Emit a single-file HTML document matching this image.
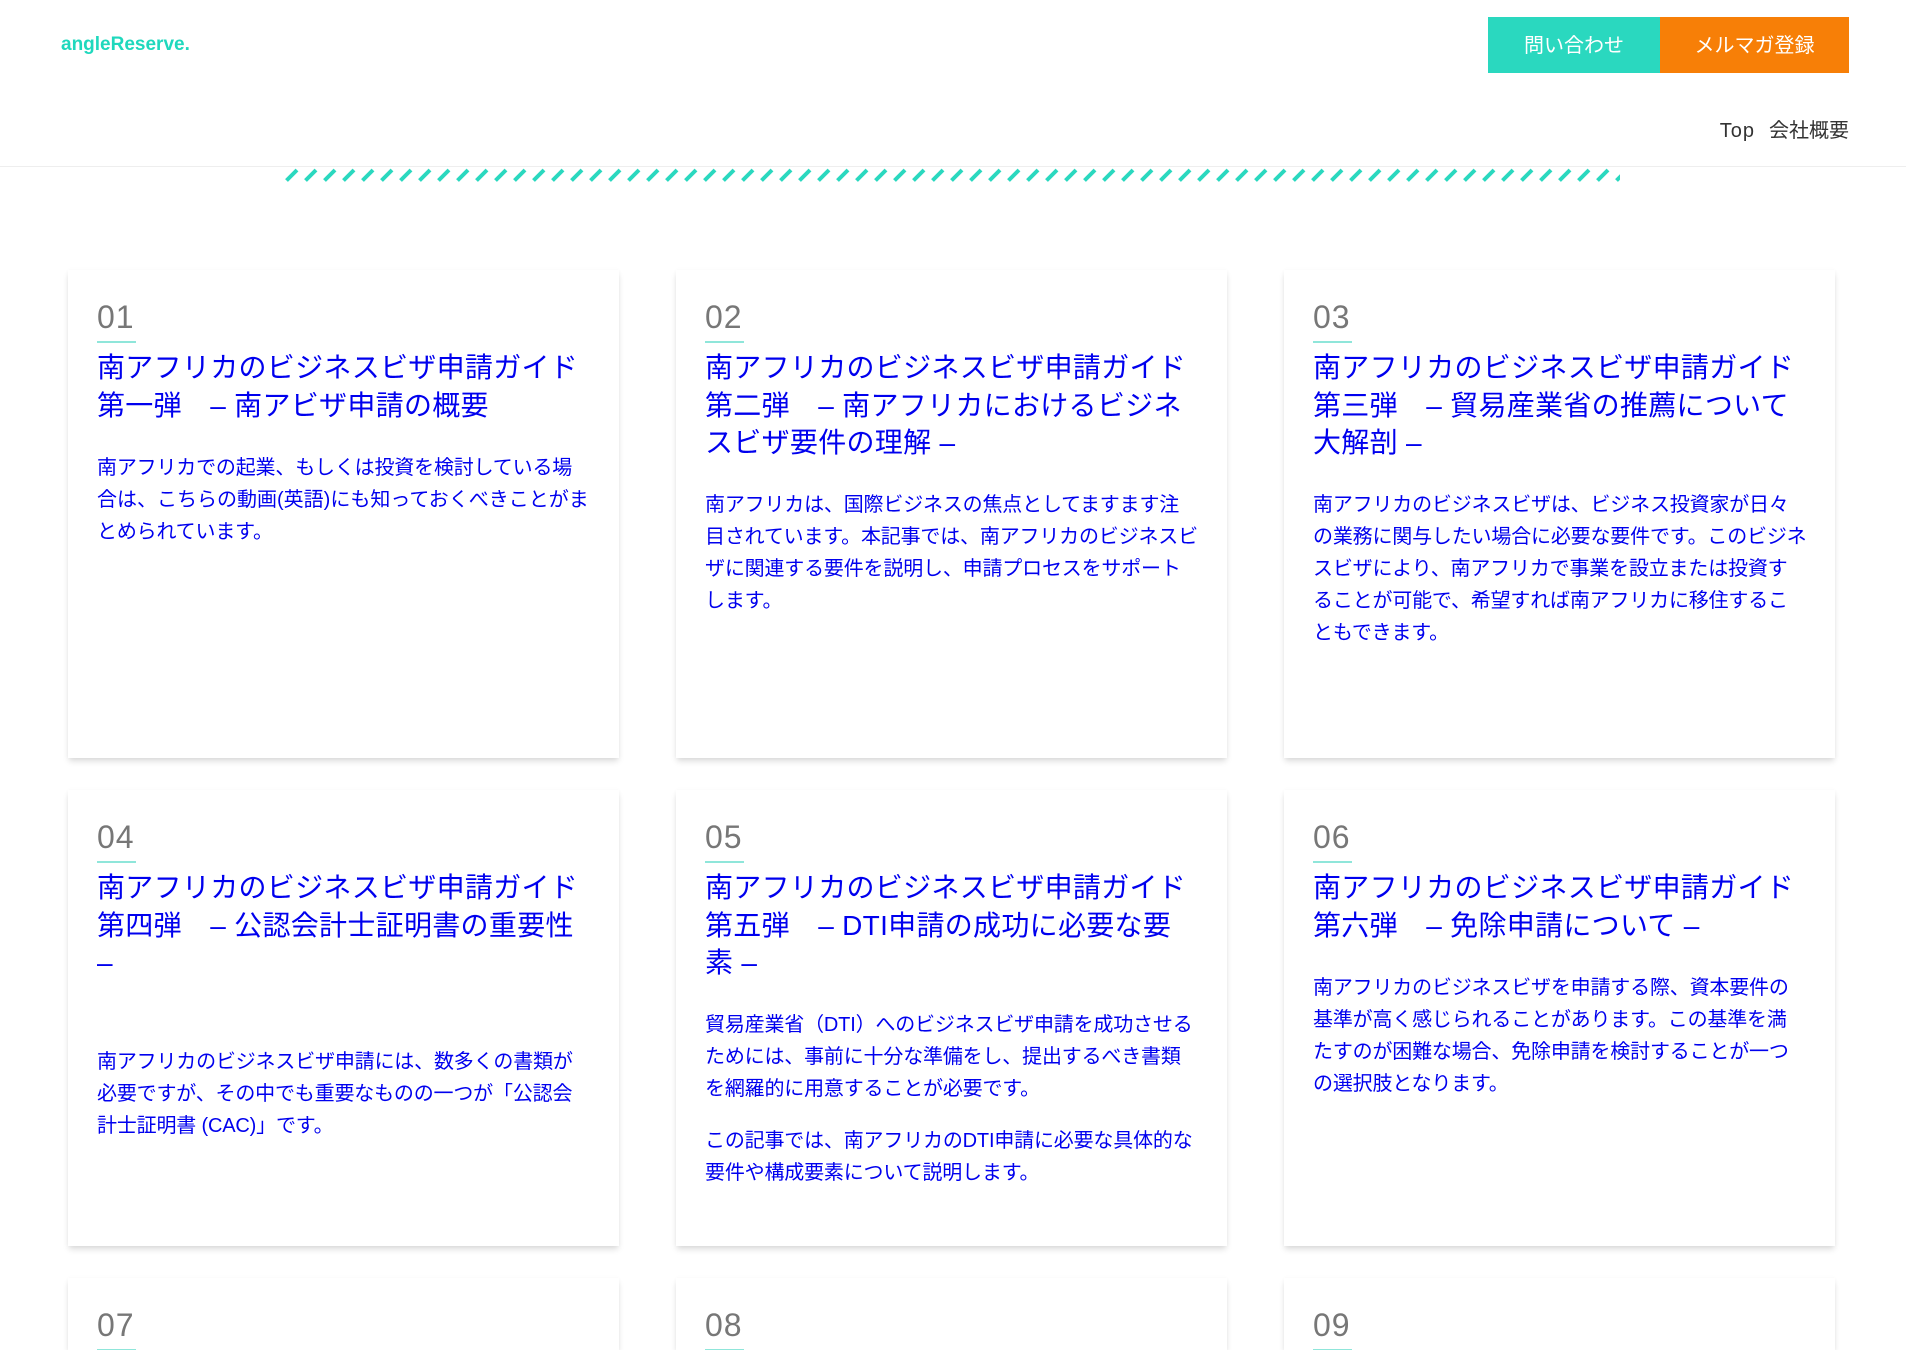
<!DOCTYPE html>
<html lang="ja">
<head>
<meta charset="utf-8">
<title>angleReserve</title>
<style>
html,body{margin:0;padding:0;background:#fff;width:1906px;height:1350px;overflow:hidden}
body{position:relative;font-family:"Liberation Sans","Noto Sans CJK JP",sans-serif;font-weight:400}
.logo{position:absolute;left:61px;top:33px;font-size:19px;line-height:24px;font-weight:700;color:#1fd8bd;white-space:nowrap}
.btn{position:absolute;top:17px;height:56px;line-height:59px;text-align:center;color:#fff;font-size:20px;font-weight:400}
.b1{left:1488px;width:172px;background:#2ad8bf}
.b2{left:1660px;width:189px;background:#f77f07}
.nav{position:absolute;top:115px;right:57px;font-size:20px;line-height:32px;color:#333;white-space:nowrap;font-weight:400}
.nav b{font-weight:400;letter-spacing:1px}
.nav span{margin-left:14px}
.rule{position:absolute;left:0;top:166px;width:1906px;height:1px;background:#eee}
.stripes{position:absolute;left:285px;top:168px}
.card{position:absolute;width:551px;background:#fff;box-shadow:0 4px 6px -1px rgba(0,0,0,.15),0 0 4px rgba(0,0,0,.03);box-sizing:border-box;padding:27px 29px 0;overflow:hidden}
.num{font-size:32px;line-height:40px;color:#777;width:39px;border-bottom:2px solid #8fe6da;padding-bottom:4px;white-space:nowrap;letter-spacing:1px}
.t{margin:6px 0 0;font-size:28px;line-height:37.5px;color:#00e;font-weight:400;white-space:nowrap;letter-spacing:.3px}
.d{margin:27.5px 0 0;font-size:20px;line-height:32px;color:#00e;white-space:nowrap;letter-spacing:-.18px}
.d+.d{margin-top:20px}
.x1{left:68px}.x2{left:676px}.x3{left:1284px}
.r1{top:270px;height:488px}
.r2{top:790px;height:456px}
.r3{top:1278px;height:72px}
</style>
</head>
<body>
<div class="logo">angleReserve.</div>
<div class="btn b1">問い合わせ</div>
<div class="btn b2">メルマガ登録</div>
<div class="nav"><b>Top</b><span>会社概要</span></div>
<div class="rule"></div>
<svg class="stripes" width="1335" height="14" viewBox="0 0 1335 14">
<defs><pattern id="s" width="19" height="14" patternUnits="userSpaceOnUse"><path d="M1.5 12.5L12 2" stroke="#2ad8bf" stroke-width="4" fill="none"/></pattern></defs>
<rect width="1335" height="14" fill="url(#s)"/>
</svg>

<div class="card x1 r1"><div class="num">01</div>
<h3 class="t">南アフリカのビジネスビザ申請ガイド<br>第一弾　– 南アビザ申請の概要</h3>
<p class="d">南アフリカでの起業、もしくは投資を検討している場<br><span style="letter-spacing:0">合は、こちらの動画(英語)にも知っておくべきことがま</span><br>とめられています。</p></div>

<div class="card x2 r1"><div class="num">02</div>
<h3 class="t">南アフリカのビジネスビザ申請ガイド<br>第二弾　– 南アフリカにおけるビジネ<br>スビザ要件の理解 –</h3>
<p class="d">南アフリカは、国際ビジネスの焦点としてますます注<br>目されています。本記事では、南アフリカのビジネスビ<br>ザに関連する要件を説明し、申請プロセスをサポート<br>します。</p></div>

<div class="card x3 r1"><div class="num">03</div>
<h3 class="t">南アフリカのビジネスビザ申請ガイド<br>第三弾　– 貿易産業省の推薦について<br>大解剖 –</h3>
<p class="d">南アフリカのビジネスビザは、ビジネス投資家が日々<br>の業務に関与したい場合に必要な要件です。このビジネ<br>スビザにより、南アフリカで事業を設立または投資す<br>ることが可能で、希望すれば南アフリカに移住するこ<br>ともできます。</p></div>

<div class="card x1 r2"><div class="num">04</div>
<h3 class="t">南アフリカのビジネスビザ申請ガイド<br>第四弾　– 公認会計士証明書の重要性<br>–</h3>
<p class="d" style="margin-top:64px">南アフリカのビジネスビザ申請には、数多くの書類が<br>必要ですが、その中でも重要なものの一つが「公認会<br>計士証明書 (CAC)」です。</p></div>

<div class="card x2 r2"><div class="num">05</div>
<h3 class="t">南アフリカのビジネスビザ申請ガイド<br>第五弾　– DTI申請の成功に必要な要<br>素 –</h3>
<p class="d" style="margin-top:27px">貿易産業省（DTI）へのビジネスビザ申請を成功させる<br>ためには、事前に十分な準備をし、提出するべき書類<br>を網羅的に用意することが必要です。</p>
<p class="d">この記事では、南アフリカのDTI申請に必要な具体的な<br>要件や構成要素について説明します。</p></div>

<div class="card x3 r2"><div class="num">06</div>
<h3 class="t">南アフリカのビジネスビザ申請ガイド<br>第六弾　– 免除申請について –</h3>
<p class="d">南アフリカのビジネスビザを申請する際、資本要件の<br>基準が高く感じられることがあります。この基準を満<br>たすのが困難な場合、免除申請を検討することが一つ<br>の選択肢となります。</p></div>

<div class="card x1 r3"><div class="num">07</div></div>
<div class="card x2 r3"><div class="num">08</div></div>
<div class="card x3 r3"><div class="num">09</div></div>
</body>
</html>
